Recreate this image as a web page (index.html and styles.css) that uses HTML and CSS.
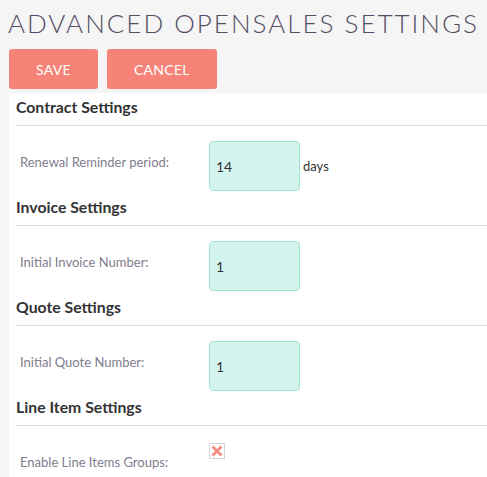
FILE: index.html
```html
<!DOCTYPE html>
<html>
<head>
<meta charset="utf-8">
<title>Advanced OpenSales Settings</title>
<link rel="stylesheet" href="styles.css">
</head>
<body>
<h1 class="page-title">ADVANCED OPENSALES SETTINGS</h1>
<div class="actions">
  <button class="btn">SAVE</button>
  <button class="btn">CANCEL</button>
</div>
<div class="panel">
  <h3 class="section-title">Contract Settings</h3>
  <div class="row">
    <div class="label">Renewal Reminder period:</div>
    <div class="field"><input class="num" type="text" value="14"><span class="unit">days</span></div>
  </div>
  <h3 class="section-title">Invoice Settings</h3>
  <div class="row">
    <div class="label">Initial Invoice Number:</div>
    <div class="field"><input class="num" type="text" value="1"></div>
  </div>
  <h3 class="section-title">Quote Settings</h3>
  <div class="row">
    <div class="label">Initial Quote Number:</div>
    <div class="field"><input class="num" type="text" value="1"></div>
  </div>
  <h3 class="section-title">Line Item Settings</h3>
  <div class="row">
    <div class="label">Enable Line Items Groups:</div>
    <div class="field field-top">
      <span class="check">
        <svg width="16" height="16" viewBox="0 0 16 16"><rect x="0.5" y="0.5" width="15" height="15" fill="#fff" stroke="#d4d4d4"/><path d="M3.5 3.5 L12.5 12.5 M12.5 3.5 L3.5 12.5" stroke="#f58a82" stroke-width="2.8" stroke-linecap="butt"/></svg>
      </span>
    </div>
  </div>
</div>
</body>
</html>
```
FILE: styles.css
```css
html, body {
  margin: 0;
  padding: 0;
}
body {
  background: #f5f5f5;
  font-family: Lato, "Open Sans", sans-serif;
  overflow: hidden;
  height: 477px;
}
.page-title {
  margin: 0;
  padding: 8px 0 0 8px;
  font-size: 26px;
  font-weight: 300;
  line-height: 30px;
  letter-spacing: 2px;
  color: #534d64;
  white-space: nowrap;
}
.actions {
  display: flex;
  gap: 9px;
  padding: 11px 0 0 9px;
}
.btn {
  height: 40px;
  padding: 0 27px;
  border: none;
  border-radius: 3px;
  background: #f58377;
  color: #fff;
  font-family: Lato, sans-serif;
  font-size: 14px;
  letter-spacing: 0.3px;
}
.panel {
  margin: 4px 0 0 9px;
  background: #fff;
  padding: 0 0 0 7px;
  height: 400px;
}
.section-title {
  margin: 0;
  padding: 4px 0 8px;
  line-height: 20px;
  font-size: 15.8px;
  font-weight: 700;
  color: #333;
  border-bottom: 1px solid #dddddd;
}
.row {
  display: flex;
  margin-top: 15px;
  padding-bottom: 2px;
}
.label {
  width: 189px;
  padding: 12px 0 0 4px;
  line-height: 18px;
  font-size: 13px;
  color: #817c8d;
}
.field {
  display: flex;
  align-items: center;
}
.field-top {
  align-items: flex-start;
  padding-top: 2px;
  height: 48px;
}
.num {
  box-sizing: border-box;
  width: 91px;
  height: 50px;
  margin: 0;
  padding: 0 6px;
  background: #d3f5ed;
  border: 1px solid #a2e6d4;
  border-radius: 4px;
  font-family: Lato, sans-serif;
  font-size: 14px;
  color: #333;
  outline: none;
}
.unit {
  margin-left: 3px;
  font-size: 13px;
  color: #333;
}
.check {
  display: block;
  width: 16px;
  height: 16px;
}
.check svg {
  display: block;
}
```
